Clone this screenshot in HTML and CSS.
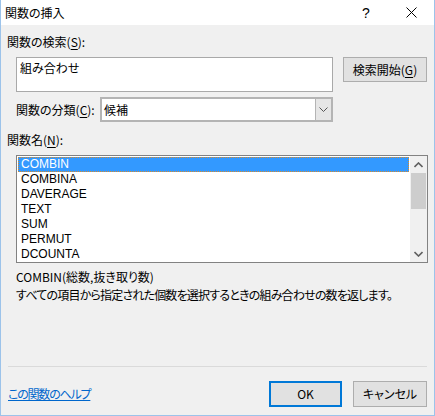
FILE: index.html
```html
<!DOCTYPE html>
<html lang="ja">
<head>
<meta charset="utf-8">
<title>関数の挿入</title>
<link rel="stylesheet" href="styles.css">
</head>
<body>
<div class="window">
  <div class="titlebar">
    <span class="title">関数の挿入</span>
    <span class="help-btn">?</span>
    <span class="close-btn">
      <svg width="11" height="11" viewBox="0 0 11 11"><path d="M0.5 0.5 L10.5 10.5 M10.5 0.5 L0.5 10.5" stroke="#000" stroke-width="1" fill="none"/></svg>
    </span>
  </div>
  <div class="content">
    <div class="label first">関数の検索(<u>S</u>):</div>
    <div class="search-row">
      <div class="textbox">組み合わせ</div>
      <div class="button go">検索開始(<u>G</u>)</div>
    </div>
    <div class="cat-row">
      <span class="cat-label">関数の分類(<u>C</u>):</span>
      <div class="combo">
        <span class="combo-text">候補</span>
        <span class="combo-btn">
          <svg width="9" height="5" viewBox="0 0 9 5"><path d="M0.5 0.5 L4.5 4.5 L8.5 0.5" stroke="#555" stroke-width="1" fill="none"/></svg>
        </span>
      </div>
    </div>
    <div class="label names">関数名(<u>N</u>):</div>
    <div class="listbox">
      <div class="rows">
        <div class="row selected">COMBIN</div>
        <div class="row">COMBINA</div>
        <div class="row">DAVERAGE</div>
        <div class="row">TEXT</div>
        <div class="row">SUM</div>
        <div class="row">PERMUT</div>
        <div class="row">DCOUNTA</div>
      </div>
      <div class="scrollbar">
        <div class="arrow">
          <svg width="9" height="6" viewBox="0 0 9 6"><path d="M0.5 5 L4.5 1 L8.5 5" stroke="#606060" stroke-width="1.6" fill="none"/></svg>
        </div>
        <div class="thumb"></div>
        <div class="track"></div>
        <div class="arrow">
          <svg width="9" height="6" viewBox="0 0 9 6"><path d="M0.5 1 L4.5 5 L8.5 1" stroke="#606060" stroke-width="1.6" fill="none"/></svg>
        </div>
      </div>
    </div>
    <div class="desc">
      <div class="syntax">COMBIN(総数,抜き取り数)</div>
      <div class="explain">すべての項目から指定された個数を選択するときの組み合わせの数を返します。</div>
    </div>
    <div class="separator"></div>
    <div class="footer">
      <a class="help-link" href="#">この関数のヘルプ</a>
      <div class="buttons">
        <div class="button ok">OK</div>
        <div class="button cancel">キャンセル</div>
      </div>
    </div>
  </div>
</div>
</body>
</html>
```
FILE: styles.css
```css
html, body {
  margin: 0;
  padding: 0;
  background: #f0f0f0;
}
body {
  font-family: "Noto Sans CJK JP", "Noto Sans", sans-serif;
  font-size: 12px;
  color: #000;
  font-feature-settings: "palt";
}
.window {
  width: 435px;
  height: 416px;
  box-sizing: border-box;
  border-left: 1px solid #9cc3ea;
  border-right: 1px solid #9cc3ea;
  border-bottom: 1px solid #9cc3ea;
  display: flex;
  flex-direction: column;
  background: #f0f0f0;
}
.titlebar {
  height: 25px;
  background: #fff;
  display: flex;
  align-items: center;
  flex-shrink: 0;
}
.title {
  margin-left: 4px;
  line-height: 16px;
  padding-top: 1px;
}
.help-btn {
  margin-left: auto;
  width: 14px;
  text-align: center;
  font-size: 14px;
  font-family: "Liberation Sans", sans-serif;
  margin-right: 33px;
}
.close-btn {
  width: 11px;
  height: 11px;
  margin-right: 17px;
  display: flex;
}
.content {
  flex: 1;
  display: flex;
  flex-direction: column;
  padding: 0 7px 8px 6px;
}
.label {
  line-height: 16px;
}
.label.first {
  margin-top: 9px;
}
u {
  text-decoration: underline;
  text-underline-offset: 2px;
}
.search-row {
  display: flex;
  align-items: flex-start;
  margin-top: 7px;
  margin-left: 9px;
}
.textbox {
  width: 317px;
  height: 35px;
  box-sizing: border-box;
  background: #fff;
  border: 1px solid #a9a9a9;
  padding: 2px 0 0 3px;
  line-height: 16px;
}
.button {
  box-sizing: border-box;
  background: #e1e1e1;
  border: 1px solid #adadad;
  display: flex;
  align-items: center;
  justify-content: center;
  line-height: 16px;
}
.button.go {
  margin-left: 10px;
  width: 84px;
  height: 25px;
}
.cat-row {
  display: flex;
  align-items: center;
  margin-top: 5px;
  margin-left: 9px;
}
.cat-label {
  width: 84px;
  line-height: 16px;
}
.combo {
  width: 233px;
  height: 25px;
  box-sizing: border-box;
  border: 2px solid #b4b4b4;
  background: #fff;
  display: flex;
  align-items: stretch;
}
.combo-text {
  flex: 1;
  padding-left: 2px;
  line-height: 21px;
}
.combo-btn {
  width: 15px;
  background: #e6e6e6;
  border-left: 1px solid #b4b4b4;
  display: flex;
  align-items: center;
  justify-content: center;
}
.label.names {
  margin-top: 10px;
}
.listbox {
  margin-top: 7px;
  margin-left: 9px;
  width: 412px;
  height: 108px;
  box-sizing: border-box;
  border: 1px solid #828282;
  background: #fff;
  display: flex;
}
.rows {
  flex: 1;
  padding: 1px;
}
.row {
  height: 15px;
  line-height: 15px;
  padding-left: 3px;
  box-sizing: border-box;
  font-family: "Liberation Sans", Arial, sans-serif;
  font-size: 12px;
}
.row.selected {
  background: #3399ff;
  color: #fff;
  outline: 1px dotted #d88a2a;
  outline-offset: -1px;
}
.scrollbar {
  width: 17px;
  background: #f0f0f0;
  display: flex;
  flex-direction: column;
}
.arrow {
  height: 17px;
  display: flex;
  align-items: center;
  justify-content: center;
}
.thumb {
  height: 36px;
  margin: 0 1px;
  background: #cdcdcd;
}
.track {
  flex: 1;
}
.desc {
  margin-top: 5px;
  margin-left: 9px;
}
.syntax, .explain {
  line-height: 18px;
}
.explain {
  letter-spacing: -0.8px;
}
.separator {
  margin-top: auto;
  height: 1px;
  background: #dadada;
  margin-left: 1px;
}
.footer {
  margin-top: 14px;
  display: flex;
  align-items: center;
}
.help-link {
  color: #0066cc;
  text-decoration: underline;
  line-height: 16px;
  margin-left: 1px;
  letter-spacing: -1.2px;
}
.buttons {
  margin-left: auto;
  display: flex;
  gap: 11px;
}
.button.ok {
  width: 73px;
  height: 26px;
  border: 2px solid #0078d7;
}
.button.cancel {
  width: 74px;
  height: 26px;
}
```
